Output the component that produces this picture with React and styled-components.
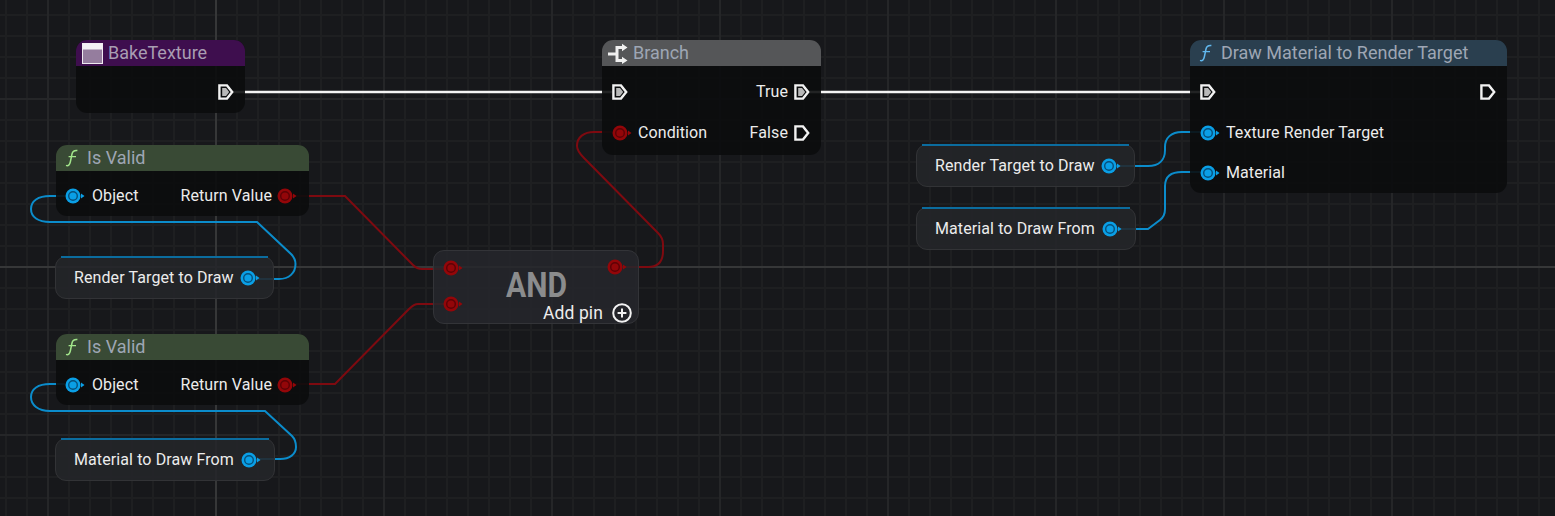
import React from 'react'
import styled, { createGlobalStyle } from 'styled-components'

const GlobalStyle = createGlobalStyle`
  html, body {
    margin: 0;
    padding: 0;
    background: #17181a;
    font-family: Roboto, "Liberation Sans", sans-serif;
  }
`

const BLUE = '#0a9fe6'
const BLUE_DARK = '#06517c'
const RED = '#930609'
const RED_DARK = '#5e0206'
const BLUE_WIRE = '#0b8ccb'
const RED_WIRE = '#7e0a10'

const Canvas = styled.div`
  position: relative;
  width: 1555px;
  height: 516px;
  overflow: hidden;
  background-color: #17181b;
  background-image:
    linear-gradient(#363738, #363738),
    linear-gradient(#363738, #363738),
    linear-gradient(90deg, #252628 2px, transparent 2px),
    linear-gradient(#252628 2px, transparent 2px),
    linear-gradient(90deg, #1e1f21 2px, transparent 2px),
    linear-gradient(#1e1f21 2px, transparent 2px);
  background-size: 2px 100%, 100% 2px, 168px 100%, 100% 168px, 21px 100%, 100% 21px;
  background-position: 215px 0, 0 266px, 47px 0, 0 98px, 5px 0, 0 14px;
  background-repeat: no-repeat, no-repeat, repeat, repeat, repeat, repeat;
`

const Wires = styled.svg`
  position: absolute;
  left: 0;
  top: 0;
  width: 1555px;
  height: 516px;
  fill: none;
`

const Node = styled.div`
  position: absolute;
  left: ${p => p.$x}px;
  top: ${p => p.$y}px;
  width: ${p => p.$w}px;
  height: ${p => p.$h}px;
  border-radius: 11px;
  background: rgba(11, 12, 13, 0.9);
  overflow: hidden;
`

const Header = styled.div`
  display: flex;
  align-items: center;
  gap: ${p => p.$gap || 5}px;
  height: 26px;
  padding-left: ${p => p.$pad || 9}px;
  background: ${p => p.$color};
`

const Title = styled.span`
  font-size: 18px;
  line-height: 25px;
  padding-bottom: 1px;
  color: ${p => p.$color || '#9ea6b4'};
  white-space: nowrap;
`

const Body = styled.div`
  padding: ${p => p.$top || 6}px ${p => p.$right || 11}px 0 ${p => p.$left || 10}px;
`

const Row = styled.div`
  display: flex;
  align-items: center;
  justify-content: space-between;
  height: ${p => p.$h || 40}px;
`

const Side = styled.div`
  display: flex;
  align-items: center;
  gap: ${p => p.$gap || 7}px;
`

const Label = styled.span`
  font-size: ${p => p.$size || 16}px;
  line-height: 20px;
  letter-spacing: 0.1px;
  color: #ececec;
  white-space: nowrap;
`

const VarNode = styled.div`
  position: absolute;
  left: ${p => p.$x}px;
  top: ${p => p.$y}px;
  width: ${p => p.$w}px;
  height: 43px;
  box-sizing: border-box;
  display: flex;
  align-items: center;
  justify-content: space-between;
  padding: 0 13px 0 18px;
  border: 1px solid #323336;
  border-radius: 11px;
  background: rgba(36, 37, 41, 0.88);

  &::before {
    content: '';
    position: absolute;
    left: 5px;
    right: 5px;
    top: -1px;
    height: 2px;
    background: #0b6c9e;
  }
`

const AndNode = styled.div`
  position: absolute;
  left: 433px;
  top: 250px;
  width: 206px;
  height: 74px;
  box-sizing: border-box;
  display: grid;
  grid-template-columns: 1fr auto 1fr;
  grid-template-rows: 52px 20px;
  border: 1px solid #333438;
  border-radius: 11px;
  background: rgba(38, 39, 43, 0.85);
`

const AndInputs = styled.div`
  grid-row: 1 / 3;
  display: flex;
  flex-direction: column;
  gap: 20px;
  padding: 9px 0 0 9px;
`

const AndTitle = styled.div`
  grid-column: 2;
  grid-row: 1;
  align-self: start;
  margin-top: 15px;
  font-size: 35px;
  font-weight: 700;
  line-height: 40px;
  color: #8b8c8d;
  transform: scaleX(0.86);
`

const AndOutput = styled.div`
  grid-column: 3;
  grid-row: 1;
  justify-self: end;
  padding: 8px 11px 0 0;
`

const AddPin = styled.div`
  grid-column: 2 / 4;
  grid-row: 2;
  justify-self: end;
  display: flex;
  align-items: center;
  gap: 9px;
  padding-right: 6px;
`

const PinSvg = styled.svg`
  display: block;
  flex: none;
`

const DataPin = ({ color, dark }) => (
  <PinSvg width="20" height="16" viewBox="0 0 20 16">
    <circle cx="8" cy="8" r="7.5" fill={color} />
    <circle cx="8" cy="8" r="4.3" fill="none" stroke={dark} strokeWidth="1.4" />
    <path d="M16 5.5 L19.5 8 L16 10.5 Z" fill={color} />
  </PinSvg>
)

const BluePin = () => <DataPin color={BLUE} dark={BLUE_DARK} />
const RedPin = () => <DataPin color={RED} dark={RED_DARK} />

const ExecPin = ({ linked }) => (
  <PinSvg width="16" height="16" viewBox="0 0 16 16">
    <path d="M1.400 1.400 H9 L14.200 8 L9 14.600 H1.400 Z" fill="none" stroke="#f2f2f2" strokeWidth="2.400" />
    {linked && <path d="M4.200 4 H8 L11.200 8 L8 12 H4.200 Z" fill="#b8b8b8" />}
  </PinSvg>
)

const FunctionIcon = ({ color }) => (
  <PinSvg width="14" height="18" viewBox="0 0 14 18">
    <path d="M1 16.400 C3.400 17.200 4.600 16 5.300 13 L7 5 C7.600 2.400 9 1.200 12.400 1.600" fill="none" stroke={color} strokeWidth="1.500" />
    <path d="M3.600 7.600 H11" fill="none" stroke={color} strokeWidth="1.400" />
  </PinSvg>
)

const EventIcon = () => (
  <PinSvg width="21" height="21" viewBox="0 0 21 21">
    <rect x="0.5" y="0.5" width="20" height="20" fill="#957d9e" stroke="#efeaf0" />
    <rect x="0.5" y="0.5" width="20" height="6" fill="#f3f0f4" />
  </PinSvg>
)

const BranchIcon = () => (
  <PinSvg width="20" height="21" viewBox="0 0 20 21">
    <path d="M0 11 H9 M9 4.500 H15 M9 17.500 H15 M9 3 V19" fill="none" stroke="#f0f0f0" strokeWidth="3" />
    <path d="M14 0.800 L19.500 4.500 L14 8.200 Z M14 13.800 L19.500 17.500 L14 21 Z" fill="#f0f0f0" />
  </PinSvg>
)

const PlusIcon = () => (
  <PinSvg width="20" height="20" viewBox="0 0 20 20">
    <circle cx="10" cy="10" r="8.800" fill="none" stroke="#f2f2f2" strokeWidth="2" />
    <path d="M10 5.600 V14.400 M5.600 10 H14.400" fill="none" stroke="#f2f2f2" strokeWidth="2" />
  </PinSvg>
)

const IsValidNode = ({ y }) => (
  <Node $x={56} $y={y} $w={253} $h={71}>
    <Header $color="#394a35" $gap={8}>
      <FunctionIcon color="#a2e58b" />
      <Title>Is Valid</Title>
    </Header>
    <Body $top={5} $left={9} $right={12}>
      <Row>
        <Side><BluePin /><Label>Object</Label></Side>
        <Side $gap={5}><Label>Return Value</Label><RedPin /></Side>
      </Row>
    </Body>
  </Node>
)

const blueWires = [
  'M65 196 H50 C38 196 31 201 31 209 C31 217 38 222 50 222 H257 L291 254 C294 257 295.500 260 295.500 264 C295.500 273 289 279 279 279 H258',
  'M65 384 H50 C38 384 31 389 31 397 C31 405 38 411 50 411 H265 L292 436 C295 439 296 442 296 447 C296 454 290 459 280 459 H258',
  'M1116 166 H1148 C1159 166 1165 160 1165 150 V147 C1165 138 1171 132 1182 132 H1202',
  'M1118 229 H1148 L1160 220 C1164 217 1165 214 1165 209 V186 C1165 177 1171 172 1182 172 H1202',
]

const redWires = [
  'M294 196 H345 L413 265 C416 268 418 269 422 269 H445',
  'M294 384 H335 L409 309 C412 306 414 304 418 304 H445',
  'M625 267 H648 C658 267 663 261 663 251 V244 C663 239 661 236 658 233 L584 158 C579 153 577 150 577 146 C577 137 584 132 594 132 H612',
]

export default function App() {
  return (
    <Canvas>
      <GlobalStyle />
      <Wires viewBox="0 0 1555 516">
        <path d="M232 92 H612" stroke="#f4f4f4" strokeWidth="2.6" />
        <path d="M810 92 H1202" stroke="#f4f4f4" strokeWidth="2.6" />
        {blueWires.map(d => <path key={d} d={d} stroke={BLUE_WIRE} strokeWidth="2" />)}
        {redWires.map(d => <path key={d} d={d} stroke={RED_WIRE} strokeWidth="2" />)}
      </Wires>

      <Node $x={76} $y={40} $w={169} $h={73}>
        <Header $color="#3e0e4e" $pad={6}>
          <EventIcon />
          <Title $color="#a99db2">BakeTexture</Title>
        </Header>
        <Body>
          <Row>
            <span />
            <ExecPin linked />
          </Row>
        </Body>
      </Node>

      <Node $x={602} $y={40} $w={219} $h={115}>
        <Header $color="#555658" $pad={6}>
          <BranchIcon />
          <Title>Branch</Title>
        </Header>
        <Body>
          <Row>
            <ExecPin linked />
            <Side $gap={6}><Label>True</Label><ExecPin linked /></Side>
          </Row>
          <Row $h={42}>
            <Side $gap={6}><RedPin /><Label>Condition</Label></Side>
            <Side $gap={6}><Label>False</Label><ExecPin /></Side>
          </Row>
        </Body>
      </Node>

      <Node $x={1190} $y={40} $w={317} $h={153}>
        <Header $color="#2a3f4f" $gap={8}>
          <FunctionIcon color="#62b8ee" />
          <Title>Draw Material to Render Target</Title>
        </Header>
        <Body>
          <Row>
            <ExecPin linked />
            <ExecPin />
          </Row>
          <Row $h={42}>
            <Side $gap={6}><BluePin /><Label>Texture Render Target</Label></Side>
          </Row>
          <Row $h={38}>
            <Side $gap={6}><BluePin /><Label>Material</Label></Side>
          </Row>
        </Body>
      </Node>

      <IsValidNode y={145} />
      <IsValidNode y={334} />

      <VarNode $x={55} $y={256} $w={219}>
        <Label>Render Target to Draw</Label>
        <BluePin />
      </VarNode>

      <VarNode $x={55} $y={438} $w={220}>
        <Label>Material to Draw From</Label>
        <BluePin />
      </VarNode>

      <VarNode $x={916} $y={144} $w={219}>
        <Label>Render Target to Draw</Label>
        <BluePin />
      </VarNode>

      <VarNode $x={916} $y={207} $w={220}>
        <Label>Material to Draw From</Label>
        <BluePin />
      </VarNode>

      <AndNode>
        <AndInputs>
          <RedPin />
          <RedPin />
        </AndInputs>
        <AndTitle>AND</AndTitle>
        <AndOutput><RedPin /></AndOutput>
        <AddPin>
          <Label $size={17.5}>Add pin</Label>
          <PlusIcon />
        </AddPin>
      </AndNode>
    </Canvas>
  )
}
